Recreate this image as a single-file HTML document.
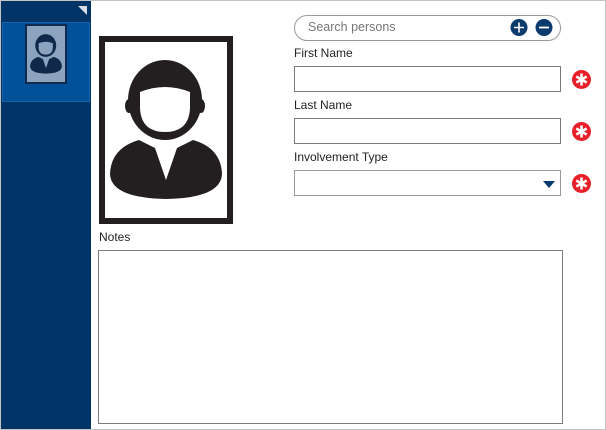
<!DOCTYPE html>
<html><head><style>
*{margin:0;padding:0;box-sizing:border-box}
body{width:606px;height:430px;position:relative;background:#fff;font-family:"Segoe UI","Liberation Sans",sans-serif;font-size:12px;color:#222;overflow:hidden}
.abs{position:absolute}
.inp{position:absolute;left:294px;width:267px;height:26px;border:1px solid #7a7a7a;background:#fff}
.lbl{position:absolute;left:294px;font-size:12px;color:#222}
.ast{position:absolute;left:572px;width:19px;height:19px}
</style></head><body>
<div class="abs" style="left:0;top:0;width:606px;height:430px;border:1px solid #c4c4c4"></div>
<div class="abs" style="left:1px;top:1px;width:90px;height:428px;background:#003466"></div>
<div class="abs" style="left:78px;top:6px;width:0;height:0;border-top:9px solid #d8dde6;border-left:9px solid transparent"></div>
<div class="abs" style="left:2px;top:22px;width:88px;height:80px;background:#00509a;border:1px solid #1a62a8"></div>
<div class="abs" style="left:25px;top:24px;width:42px;height:60px;background:#8ca3bf;border:2px solid #0e2a4f"></div>
<svg class="abs" style="left:27px;top:26px" width="38" height="56" viewBox="0 0 134 188">
<g fill="#10284a"><ellipse cx="66" cy="64" rx="37" ry="40"/><path d="M40 104 Q12 112 11 138 Q12 162 67 163 Q122 162 123 138 Q122 112 94 104 L78 112 L67 144 L56 112Z"/></g>
<path d="M41 56 Q66 46 91 56 L91 72 Q90 96 66 96 Q42 96 41 72Z" fill="#8ca3bf"/>
</svg>
<div class="abs" style="left:99px;top:36px;width:134px;height:188px;border:6px solid #231f20;background:#fff"></div>
<svg class="abs" style="left:99px;top:36px" width="134" height="188" viewBox="0 0 134 188">
<g fill="#231f20">
<ellipse cx="66" cy="64" rx="37" ry="40"/>
<ellipse cx="30" cy="70" rx="4" ry="7"/><ellipse cx="102" cy="70" rx="4" ry="7"/>
<path d="M40 104 Q12 112 11 138 Q12 162 67 163 Q122 162 123 138 Q122 112 94 104 L78 112 L67 144 L56 112Z"/>
</g>
<path d="M41 56 Q66 46 91 56 L91 72 Q90 96 66 96 Q42 96 41 72Z" fill="#fff"/>
</svg>
<div class="abs" style="left:294px;top:15px;width:267px;height:26px;border:1px solid #9a9a9a;border-radius:13px"></div>
<div class="abs" style="left:308px;top:20px;color:#777;font-size:12.5px">Search persons</div>
<svg class="abs" style="left:510px;top:18px" width="44" height="19">
<circle cx="9" cy="9.5" r="8.5" fill="#0b3a6c"/><path d="M4 9.5H14M9 4.5V14.5" stroke="#fff" stroke-width="1.6"/>
<circle cx="34" cy="9.5" r="8.5" fill="#0b3a6c"/><path d="M29 9.5H39" stroke="#fff" stroke-width="1.8"/>
</svg>
<div class="lbl" style="top:46px">First Name</div>
<div class="inp" style="top:66px"></div>
<div class="lbl" style="top:98px">Last Name</div>
<div class="inp" style="top:118px"></div>
<div class="lbl" style="top:150px">Involvement Type</div>
<div class="inp" style="top:170px;border-color:#9a9a9a"></div>
<div class="abs" style="left:543px;top:181px;border-top:7px solid #0b3a6c;border-left:6px solid transparent;border-right:6px solid transparent"></div>
<svg class="abs" style="left:571px;top:69px" width="21" height="125">
<g id="a"><circle cx="10.5" cy="10.5" r="9.5" fill="#e8202a"/><path d="M10.5 4.5V16.5M5.3 7.5L15.7 13.5M5.3 13.5L15.7 7.5" stroke="#fff" stroke-width="2.6"/></g>
<use href="#a" y="52"/><use href="#a" y="104"/>
</svg>
<div class="abs" style="left:99px;top:230px">Notes</div>
<div class="abs" style="left:98px;top:250px;width:465px;height:174px;border:1px solid #7a7a7a"></div>
</body></html>
